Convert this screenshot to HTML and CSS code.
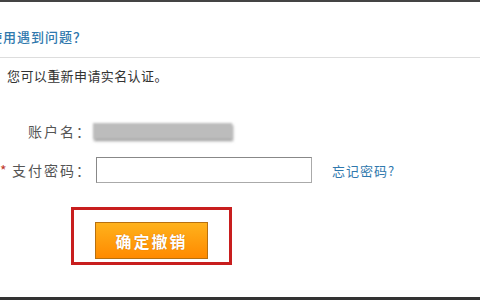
FILE: index.html
```html
<!DOCTYPE html>
<html lang="zh-CN">

<head>
    <meta charset="UTF-8">
    <meta name="viewport" content="width=device-width, initial-scale=1.0">
    <title>撤销实名认证</title>
    <link rel="stylesheet" href="styles.css">
</head>

<body>
    <div class="page">
        <div class="page-title">使用遇到问题？</div>

        <p class="notice">您可以重新申请实名认证。</p>

        <div class="form-row account-row">
            <span class="form-label">账户名：</span>
            <span class="account-name"></span>
        </div>

        <div class="form-row">
            <label class="form-label" for="pay-password"><span class="required">*</span>支付密码：</label>
            <input type="password" id="pay-password" class="password-input">
            <a href="#" class="forget-link">忘记密码?</a>
        </div>

        <!-- highlighted action area -->
        <div class="action-box">
            <button class="confirm-btn">确定撤销</button>
        </div>

        <div class="page-bottom"></div>
    </div>
</body>

</html>
```

FILE: styles.css
```css
body {
    margin: 0;
    background-color: white;
    font-family: "Noto Sans CJK SC", "Liberation Sans", sans-serif;
    overflow: hidden;
}

.page {
    display: flex;
    flex-direction: column;
    height: 300px;
    border-top: 2px solid #444;
    box-sizing: border-box;
}

.page-title {
    margin-left: -11px;
    padding: 25px 0 10px;
    font-size: 13px;
    font-weight: 500;
    line-height: 20px;
    letter-spacing: 1px;
    color: #2f78ad;
    border-bottom: 1px solid #ddd;
}

.notice {
    margin: 8px 0 0 7px;
    font-size: 13px;
    line-height: 20px;
    letter-spacing: 0.4px;
    color: #333;
}

.form-row {
    display: flex;
    align-items: center;
    height: 26px;
}

.account-row {
    margin-top: 33px;
    height: 24px;
}

.form-row + .form-row {
    margin-top: 14px;
}

.form-label {
    display: flex;
    justify-content: flex-end;
    width: 92px;
    font-size: 14px;
    letter-spacing: 2px;
    color: #555;
}

.required {
    margin-right: auto;
    color: #c0392b;
    letter-spacing: 0;
}

.account-name {
    width: 139px;
    height: 16px;
    margin-left: 1px;
    background-color: #bcbcbc;
    box-shadow: 1px 2px 2px #999;
    filter: blur(1.2px);
}

.password-input {
    width: 216px;
    height: 26px;
    margin-left: 4px;
    padding: 0 4px;
    border: 1px solid #aaa;
    border-top-color: #888;
    border-left-color: #888;
    box-sizing: border-box;
}

.forget-link {
    margin-left: 20px;
    font-size: 13px;
    letter-spacing: 1px;
    color: #2f78ad;
    text-decoration: none;
}

.action-box {
    align-self: flex-start;
    margin: 24px 0 0 71px;
    padding: 12px 21px 3px;
    border: 3px solid #c81e1e;
}

.confirm-btn {
    display: block;
    width: 113px;
    height: 37px;
    padding: 0;
    border: 1px solid #b8700f;
    background: linear-gradient(#ffb21c, #ff8a00);
    color: white;
    font-family: "Noto Sans CJK SC", sans-serif;
    font-size: 16px;
    font-weight: bold;
    letter-spacing: 2px;
    text-shadow: 0 0 1px #c06000;
    cursor: pointer;
}

.page-bottom {
    margin-top: auto;
    border-bottom: 3px solid #333;
}
```
